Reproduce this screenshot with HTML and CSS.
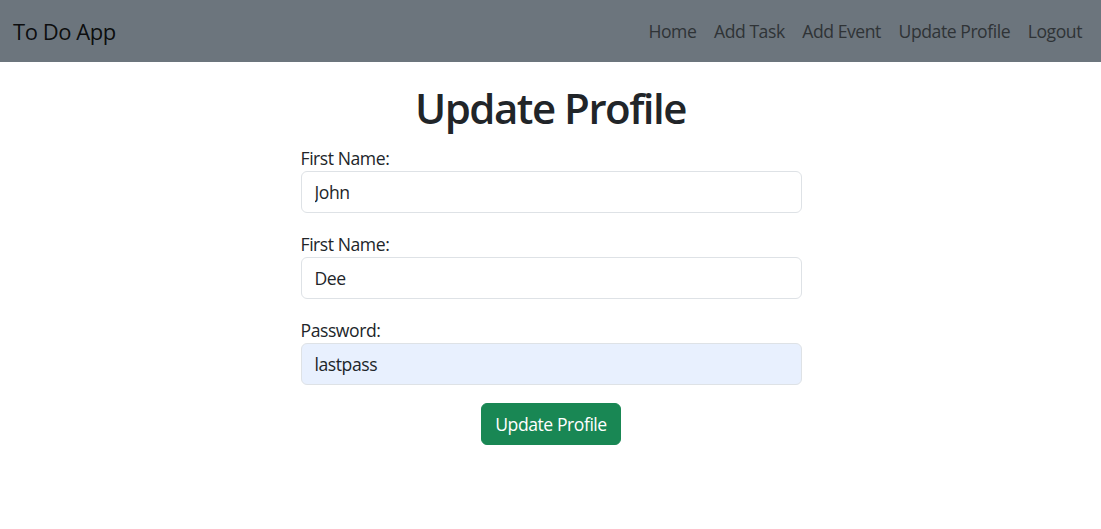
FILE: index.html
```html
<!DOCTYPE html>
<html lang="en">
<head>
<meta charset="utf-8">
<title>Update Profile</title>
<link rel="stylesheet" href="styles.css">
</head>
<body>
<nav class="navbar">
  <a class="brand" href="#">To Do App</a>
  <ul class="nav">
    <li><a href="#">Home</a></li>
    <li><a href="#">Add Task</a></li>
    <li><a href="#">Add Event</a></li>
    <li><a href="#">Update Profile</a></li>
    <li><a href="#">Logout</a></li>
  </ul>
</nav>
<main class="page">
  <h1 class="title">Update Profile</h1>
  <form class="form">
    <div class="group">
      <label class="label" for="first">First Name:</label>
      <input class="control" id="first" type="text" value="John">
    </div>
    <div class="group">
      <label class="label" for="last">First Name:</label>
      <input class="control" id="last" type="text" value="Dee">
    </div>
    <div class="group">
      <label class="label" for="pass">Password:</label>
      <input class="control autofill" id="pass" type="text" value="lastpass">
    </div>
    <div class="actions">
      <button class="btn" type="button">Update Profile</button>
    </div>
  </form>
</main>
</body>
</html>
```
FILE: styles.css
```css
* { box-sizing: border-box; }
html, body { margin: 0; padding: 0; }
body {
  font-family: "Segoe UI", "Open Sans", "Noto Sans", sans-serif;
  font-size: 17.6px;
  line-height: 1.5;
  letter-spacing: -0.45px;
  color: #212529;
  background: #fff;
}
.navbar {
  height: 62px;
  background: #6c757d;
  display: flex;
  align-items: center;
  justify-content: space-between;
  padding: 0 13px;
}
.brand {
  font-size: 22px;
  color: rgba(0,0,0,0.9);
  text-decoration: none;
  line-height: 1.5;
}
.nav {
  list-style: none;
  margin: 0;
  padding: 0;
  display: flex;
}
.nav a {
  display: block;
  padding: 8px 8.8px;
  color: #2f3336;
  text-decoration: none;
  font-size: 17.6px;
}
.nav li:last-child a { padding-right: 6px; }
.page {
  display: flex;
  flex-direction: column;
  align-items: center;
}
.title {
  margin: 21px 0 11.5px;
  font-size: 42px;
  font-weight: 600;
  line-height: 1.2;
  letter-spacing: -1.5px;
}
.form {
  width: 501px;
  display: flex;
  flex-direction: column;
  gap: 17.6px;
  margin-left: 1px;
}
.group {
  display: flex;
  flex-direction: column;
}
.label {
  line-height: 26.4px;
}
.control {
  font: inherit;
  letter-spacing: inherit;
  height: 42px;
  padding: 0 13px;
  border: 1px solid #dee2e6;
  border-radius: 6px;
  color: #212529;
  background: #fff;
}
.control.autofill { background: #e8f0fe; }
.actions {
  display: flex;
  justify-content: center;
}
.btn {
  font: inherit;
  letter-spacing: inherit;
  color: #fff;
  background: #198754;
  border: 1px solid #198754;
  border-radius: 6px;
  height: 42px;
  padding: 0 13px;
}
```
